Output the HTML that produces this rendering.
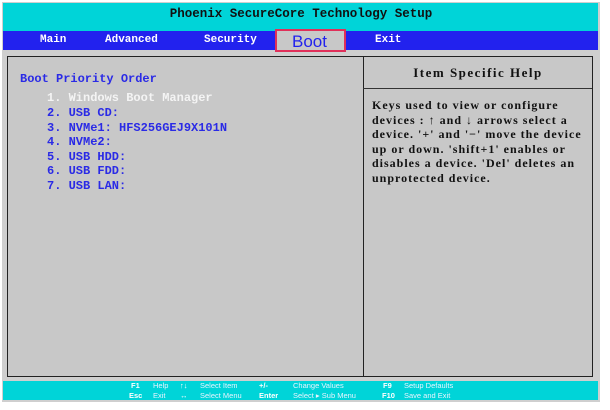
<!DOCTYPE html><html><head><style>
body{margin:0;width:610px;height:410px;background:#fff;position:relative;overflow:hidden;font-family:"Liberation Mono",monospace}
div,span{position:absolute}
.t{white-space:nowrap}
.m{color:#fff;font-weight:bold;font-size:11px;top:34px}
.l{color:#2a2ae6;font-weight:bold;font-size:12px;left:47px}
.h{color:#111;font-size:12px;letter-spacing:1px;left:372px;font-family:"Liberation Serif",serif;font-weight:bold}
.f{font-family:"Liberation Sans",sans-serif;font-size:7.5px;color:#e8f4ff}
.k{color:#fff;font-weight:bold}
</style></head><body>
<div style="left:2px;top:2px;width:598px;height:400px;background:#cfcfcf"></div>
<div style="left:3px;top:3px;width:595px;height:28px;background:#00d4d8"></div>
<div class="t" style="left:0;width:602px;top:7px;text-align:center;font-weight:bold;font-size:12.5px;color:#111">Phoenix SecureCore Technology Setup</div>
<div style="left:3px;top:31px;width:595px;height:19px;background:#2222ee"></div>
<span class="t m" style="left:40px">Main</span>
<span class="t m" style="left:105px">Advanced</span>
<span class="t m" style="left:204px">Security</span>
<div style="width:67px;height:19px;background:#c8c8c8;border:2px solid #e0305a;top:29px;left:275px"></div>
<span class="t" style="left:292px;top:32px;color:#2222ee;font-family:'Liberation Sans',sans-serif;font-size:17px">Boot</span>
<span class="t m" style="left:375px">Exit</span>
<div style="left:7px;top:56px;width:584px;height:319px;background:#c8c8c8;border:1px solid #222"></div>
<div style="left:363px;top:56px;width:1px;height:320px;background:#222"></div>
<div style="left:363px;top:88px;width:229px;height:1px;background:#333"></div>
<div class="t" style="left:364px;width:228px;top:65px;text-align:center;font-family:'Liberation Serif',serif;font-weight:bold;font-size:13px;letter-spacing:1.5px;color:#111">Item Specific Help</div>
<span class="t l" style="left:20px;top:72px;font-size:12px">Boot Priority Order</span>
<span class="t l" style="top:91px;color:#f4f4f4">1. Windows Boot Manager</span>
<span class="t l" style="top:106px">2. USB CD:</span>
<span class="t l" style="top:121px">3. NVMe1: HFS256GEJ9X101N</span>
<span class="t l" style="top:135px">4. NVMe2:</span>
<span class="t l" style="top:150px">5. USB HDD:</span>
<span class="t l" style="top:164px">6. USB FDD:</span>
<span class="t l" style="top:179px">7. USB LAN:</span>
<span class="t h" style="top:98px">Keys used to view or configure</span>
<span class="t h" style="top:113px">devices : ↑ and ↓ arrows select a</span>
<span class="t h" style="top:127px">device. '+' and '−' move the device</span>
<span class="t h" style="top:142px">up or down. 'shift+1' enables or</span>
<span class="t h" style="top:156px">disables a device. 'Del' deletes an</span>
<span class="t h" style="top:171px">unprotected device.</span>
<div style="left:3px;top:381px;width:595px;height:19px;background:#00d4d8"></div>
<span class="t f k" style="left:131px;top:381px">F1</span><span class="t f" style="left:153px;top:381px">Help</span><span class="t f k" style="left:180px;top:381px">↑↓</span><span class="t f" style="left:200px;top:381px">Select Item</span><span class="t f k" style="left:259px;top:381px">+/-</span><span class="t f" style="left:293px;top:381px">Change Values</span><span class="t f k" style="left:383px;top:381px">F9</span><span class="t f" style="left:404px;top:381px">Setup Defaults</span>
<span class="t f k" style="left:129px;top:391px">Esc</span><span class="t f" style="left:153px;top:391px">Exit</span><span class="t f k" style="left:180px;top:391px">↔</span><span class="t f" style="left:200px;top:391px">Select Menu</span><span class="t f k" style="left:259px;top:391px">Enter</span><span class="t f" style="left:293px;top:391px">Select ▸ Sub Menu</span><span class="t f k" style="left:382px;top:391px">F10</span><span class="t f" style="left:404px;top:391px">Save and Exit</span>
</body></html>
